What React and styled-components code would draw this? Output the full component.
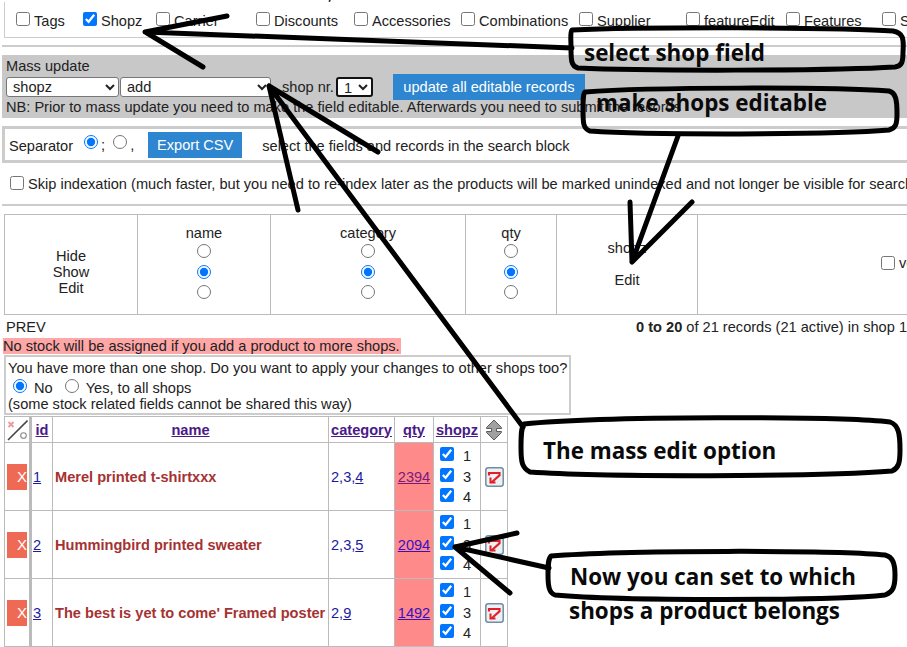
import React from "react";
import styled, { createGlobalStyle } from "styled-components";

const Global = createGlobalStyle`
  html, body { margin: 0; padding: 0; background: #fff; overflow: hidden; }
  body { font-family: "Liberation Sans", Arial, sans-serif; font-size: 14.6px; color: #222; }
  input { margin: 0; width: 14px; height: 14px; flex: none; }
`;
const Page = styled.div`
  position: relative; width: 907px; height: 647px; overflow: hidden;
`;
const Inner = styled.div`width: 1100px;`;
const ClipRow = styled.div`
  height: 2px; overflow: hidden; display: flex; align-items: flex-end; line-height: 12px;
`;
const ClipGlyph = styled.span`flex: none; margin-left: ${p => p.$l}px;`;
const FieldBox = styled.div`
  height: 35px; margin-left: 4px; display: flex; align-items: center; padding-left: 11px;
  border-left: 1px solid #ccc; border-bottom: 1px solid #ccc;
`;
const FieldItem = styled.label`
  flex: none; width: ${p => p.$w}px; display: flex; align-items: center; gap: 4px; line-height: 16px;
  white-space: nowrap; position: relative; top: 1px;
  input { position: relative; top: -2px; }
`;
const Rule = styled.div`
  height: 2px; background: #ccc; margin: ${p => p.$m};
`;
const MassBox = styled.div`
  margin: 8px 0 0 2px; height: 63px; background: #c8c8c8; padding: 3px 0 0 4px; box-sizing: border-box;
  line-height: 17px; white-space: nowrap;
`;
const MassRow = styled.div`display: flex; align-items: center; height: 24px; margin-top: 0;`;
const Sel = styled.select`
  width: ${p => p.$w}px; height: 20px; font: 14.6px "Liberation Sans", Arial, sans-serif; background: #fff; color: #222;
  border: 1px solid #777; border-radius: 3px; padding: 0 0 0 2px; margin-right: 1px; flex: none;
`;
const FocusSel = styled(Sel)`border: 2px solid #111; margin: 0 20px 0 2px;`;
const ShopNr = styled.span`margin-left: 10px; flex: none;`;
const Blue = styled.button`
  background: #2e86d0; color: #fff; border: 0; font: 14.6px "Liberation Sans", Arial, sans-serif;
  height: ${p => p.$h}px; width: ${p => p.$w}px; padding: 0; flex: none;
`;
const ExportBox = styled.div`
  margin: 8px 0 0 2px; height: 37px; border: 3px solid #ccc; border-right: 0; box-sizing: border-box;
  display: flex; align-items: center; padding-left: 4px; line-height: 16px;
`;
const SepLabel = styled.span`margin-right: 11px; position: relative; top: 1px;`;
const Sep = styled.label`display: inline-flex; align-items: center; gap: 3px; margin-right: ${p => p.$r}px;
  input { position: relative; top: -3px; }
`;
const ExportHint = styled.span`margin-left: 20px; position: relative; top: 1px;`;
const SkipRow = styled.div`
  height: 41px; display: flex; align-items: center; gap: 4px; padding-left: 10px; white-space: nowrap;
  input { position: relative; top: -1px; }
`;
const ConfTable = styled.table`
  margin: 8px 0 0 4px; border-collapse: collapse; table-layout: fixed; width: 1000px; height: 101px;
  td { border: 1px solid #bbb; padding: 0; text-align: center; vertical-align: middle; line-height: 16px; }
`;
const HideCell = styled.td`&& { padding-top: 14px; }`;
const RadioCell = styled.td`&& { padding-bottom: 5px; }`;
const ShopTd = styled.td`&& { padding-bottom: 2px; }`;
const RadioStack = styled.div`
  display: flex; flex-direction: column; align-items: center; gap: 6.3px; margin-top: 3px;
  input { display: block; }
`;
const ColName = styled.div`line-height: 16px;`;
const ShopCell = styled.div`line-height: 16px; display: flex; flex-direction: column; gap: 16px;`;
const VeRow = styled.div`display: flex; align-items: center; gap: 4px; padding-left: 183px; margin-top: -3px;`;
const PrevRow = styled.div`
  display: flex; justify-content: space-between; height: 23px; align-items: center; padding: 1px 0 0 6px; width: 907px;
  white-space: nowrap; box-sizing: border-box;
`;
const Warn = styled.div`
  display: table; background: #ffa6a6; line-height: 16px; margin-left: 3px; padding-right: 1px;
`;
const ShopBox = styled.div`
  margin: 1px 0 0 4px; width: 567px; height: 60px; border: 2px solid #ccc; box-sizing: border-box;
  padding: 3px 0 0 2px; line-height: 16px; white-space: nowrap;
`;
const ApplyRow = styled.div`
  display: flex; align-items: center; line-height: 16px; padding: 4px 0 0 5px; height: 16px;
  input { position: relative; top: -2px; }
`;
const ApplyText = styled.span`margin: 0 ${p => p.$r}px 0 7px;`;
const DataTable = styled.table`
  margin: 1px 0 0 4px; border-collapse: collapse; table-layout: fixed; width: 504px;
  th, td { border: 1px solid #bbb; padding: 0; }
  th { height: 25px; text-align: center; font-weight: bold; }
  td { height: 67px; }
`;
const Link = styled.a`color: ${p => p.$c || "#1c1aa0"}; text-decoration: underline;`;
const HeadLink = styled.a`color: #4a1a88; text-decoration: underline; font-weight: bold;`;
const DelCell = styled.td`
  && { border-right: 3px solid #bbb; text-align: left; padding-left: 2px; }
`;
const HeadFirst = styled.th`&& { border-right: 3px solid #bbb; }`;
const DelBtn = styled.span`
  display: flex; width: 20px; height: 26px; background: #ee6a55; color: #fff; font-size: 15px;
  align-items: center; justify-content: flex-end; box-sizing: border-box;
`;
const IdCell = styled.td`&& { padding-left: 1px; }`;
const NameCell = styled.td`&& { padding-left: 2px; color: #a53232; font-weight: bold; white-space: nowrap; }`;
const CatCell = styled.td`&& { padding-left: 2px; color: #1c1aa0; }`;
const QtyCell = styled.td`&& { background: #ff8a8a; text-align: center; }`;
const ShopsCell = styled.td`&& { padding-left: 6px; }`;
const ShopLine = styled.label`
  display: flex; align-items: center; height: 20.7px; gap: 9px; line-height: 20px;
  input { position: relative; top: -2px; }
`;
const EditCell = styled.td`&& { text-align: center; }`;
const Overlay = styled.svg`position: absolute; inset: 0; pointer-events: none;`;
const Note = styled.div`
  position: absolute; left: ${p => p.$x}px; top: ${p => p.$y}px; white-space: nowrap; pointer-events: none;
  font: bold 22.4px/32px "Open Sans", "Noto Sans", sans-serif; color: #0a0a0a;
`;
const IconSvg = styled.svg`display: block; margin: 0 auto;`;

const XoIcon = () => (
  <IconSvg width="22" height="22" viewBox="0 0 22 22">
    <path d="M2.5 3l5 5M7.5 3l-5 5" stroke="#e79a9a" strokeWidth="1.8" />
    <path d="M2 21L21.5 1.5" stroke="#444" strokeWidth="1.6" />
    <circle cx="17.5" cy="16.5" r="2.8" fill="none" stroke="#888" strokeWidth="1.1" />
  </IconSvg>
);
const SortIcon = () => (
  <IconSvg width="16" height="22" viewBox="0 0 16 22">
    <path d="M8 1L15.5 8.5V9.5H10.5V12.5H15.5V13.5L8 21L0.5 13.5V12.5H5.5V9.5H0.5V8.5Z" fill="#a0a0a0" stroke="#5a5a5a" strokeWidth="1" />
  </IconSvg>
);
const EditIcon = () => (
  <IconSvg width="19" height="20" viewBox="0 0 19 20">
    <rect x="0.8" y="0.8" width="17.4" height="18.4" rx="2.5" fill="#eef0f2" stroke="#6f8ea3" strokeWidth="1.5" />
    <path d="M4 8.5V6h10.5v2.2L6.5 15.5" fill="none" stroke="#e02028" strokeWidth="2.2" />
    <path d="M5.5 10.5V15.5H10.5" fill="none" stroke="#e02028" strokeWidth="2" />
  </IconSvg>
);

const fields = [
  ["Tags", 67], ["Shopz", 73, true], ["Carrier", 100], ["Discounts", 98], ["Accessories", 107],
  ["Combinations", 118], ["Supplier", 107], ["featureEdit", 100], ["Features", 96], ["Stock", 90],
];
const products = [
  { id: 1, name: "Merel printed t-shirtxxx", cat: ["2,3,", "4"], qty: 2394, c: "#7a1a7a" },
  { id: 2, name: "Hummingbird printed sweater", cat: ["2,3,", "5"], qty: 2094, c: "#3a10c0" },
  { id: 3, name: "The best is yet to come' Framed poster", cat: ["2,", "9"], qty: 1492, c: "#3a10c0" },
];
const Blank = () => {};
const Radios = () => (
  <RadioStack>
    <input type="radio" checked={false} onChange={Blank} />
    <input type="radio" checked onChange={Blank} />
    <input type="radio" checked={false} onChange={Blank} />
  </RadioStack>
);

export default function App() {
  return (
    <Page>
      <Global />
      <Inner>
        <ClipRow>
          <ClipGlyph $l={326}>y</ClipGlyph>
          <ClipGlyph $l={275}>_</ClipGlyph>
          <ClipGlyph $l={98}>_</ClipGlyph>
        </ClipRow>
        <FieldBox>
          {fields.map(([t, w, c]) => (
            <FieldItem key={t} $w={w}>
              <input type="checkbox" checked={!!c} onChange={Blank} />
              {t}
            </FieldItem>
          ))}
        </FieldBox>
        <Rule $m="7px 0 0 2px" />
        <MassBox>
          Mass update
          <MassRow>
            <Sel $w={113} defaultValue="shopz"><option>shopz</option></Sel>
            <Sel $w={151} defaultValue="add"><option>add</option></Sel>
            <ShopNr>shop nr.</ShopNr>
            <FocusSel $w={37} defaultValue="1"><option>1</option></FocusSel>
            <Blue $w={192} $h={26}>update all editable records</Blue>
          </MassRow>
          NB: Prior to mass update you need to make the field editable. Afterwards you need to submit the records
        </MassBox>
        <ExportBox>
          <SepLabel>Separator</SepLabel>
          <Sep $r={8}><input type="radio" checked onChange={Blank} />;</Sep>
          <Sep $r={14}><input type="radio" checked={false} onChange={Blank} />,</Sep>
          <Blue $w={94} $h={26}>Export CSV</Blue>
          <ExportHint>select the fields and records in the search block</ExportHint>
        </ExportBox>
        <SkipRow>
          <input type="checkbox" checked={false} onChange={Blank} />
          Skip indexation (much faster, but you need to re-index later as the products will be marked unindexed and not longer be visible for search
        </SkipRow>
        <Rule $m="0 0 0 2px" />
        <ConfTable>
          <colgroup>
            <col width="133" /><col width="133" /><col width="195" /><col width="91" /><col width="141" /><col />
          </colgroup>
          <tbody>
            <tr>
              <HideCell>Hide<br />Show<br />Edit</HideCell>
              <RadioCell><ColName>name</ColName><Radios /></RadioCell>
              <RadioCell><ColName>category</ColName><Radios /></RadioCell>
              <RadioCell><ColName>qty</ColName><Radios /></RadioCell>
              <ShopTd><ShopCell><span>shopz</span><span>Edit</span></ShopCell></ShopTd>
              <td><VeRow><input type="checkbox" checked={false} onChange={Blank} />ve</VeRow></td>
            </tr>
          </tbody>
        </ConfTable>
        <PrevRow>
          <span>PREV</span>
          <span><b>0 to 20</b> of 21 records (21 active) in shop 1</span>
        </PrevRow>
        <Warn>No stock will be assigned if you add a product to more shops.</Warn>
        <ShopBox>
          You have more than one shop. Do you want to apply your changes to other shops too?
          <ApplyRow>
            <input type="radio" checked onChange={Blank} /><ApplyText $r={12}>No</ApplyText>
            <input type="radio" checked={false} onChange={Blank} /><ApplyText $r={0}>Yes, to all shops</ApplyText>
          </ApplyRow>
          <div>(some stock related fields cannot be shared this way)</div>
        </ShopBox>
        <DataTable>
          <colgroup>
            <col width="26" /><col width="22" /><col width="276" /><col width="66" /><col width="39" /><col width="47" /><col width="27" />
          </colgroup>
          <thead>
            <tr>
              <HeadFirst><XoIcon /></HeadFirst>
              <th><HeadLink>id</HeadLink></th>
              <th><HeadLink>name</HeadLink></th>
              <th><HeadLink>category</HeadLink></th>
              <th><HeadLink>qty</HeadLink></th>
              <th><HeadLink>shopz</HeadLink></th>
              <th><SortIcon /></th>
            </tr>
          </thead>
          <tbody>
            {products.map(p => (
              <tr key={p.id}>
                <DelCell><DelBtn>X</DelBtn></DelCell>
                <IdCell><Link>{p.id}</Link></IdCell>
                <NameCell>{p.name}</NameCell>
                <CatCell>{p.cat[0]}<Link>{p.cat[1]}</Link></CatCell>
                <QtyCell><Link $c={p.c}>{p.qty}</Link></QtyCell>
                <ShopsCell>
                  {[1, 3, 4].map(s => (
                    <ShopLine key={s}><input type="checkbox" checked onChange={Blank} />{s}</ShopLine>
                  ))}
                </ShopsCell>
                <EditCell><EditIcon /></EditCell>
              </tr>
            ))}
          </tbody>
        </DataTable>
      </Inner>

      <Overlay width="907" height="647" viewBox="0 0 907 647">
        <g fill="none" stroke="#000" strokeWidth="5" strokeLinecap="round" strokeLinejoin="round">
          <path d="M227 16L145 32L572 48" />
          <path d="M147 33L203 67" />
          <path d="M572 30C640 27 840 27 893 31C903 33 904 38 903 52C903 62 902 66 895 67C830 71 640 71 578 68C571 66 571 60 571 48C571 38 570 32 572 30Z" />
          <path d="M585 92C650 87 830 87 889 91C896 93 897 100 897 114C897 124 896 128 889 130C830 135 650 135 590 131C583 129 583 122 583 110C583 100 583 94 585 92Z" />
          <path d="M678 136L632 262L630 202M632 262L692 202" />
          <path d="M378 152L269 86L298 210M269 86L523 427" />
          <path d="M524 424C600 416 840 416 890 422C899 425 900 435 900 450C900 462 899 468 892 471C820 477 600 477 530 472C522 468 521 462 521 448C521 436 521 428 524 424Z" />
          <path d="M517 533L455 547L549 568M455 547L510 593" />
          <path d="M551 556C620 550 840 550 885 555C893 557 895 564 895 575C895 587 893 592 885 595C830 601 620 601 555 595C549 593 548 586 548 575C548 565 548 559 551 556Z" />
        </g>
      </Overlay>
      <Note $x={584} $y={37}>select shop field</Note>
      <Note $x={596} $y={87}>make shops editable</Note>
      <Note $x={543} $y={435}>The mass edit option</Note>
      <Note $x={570} $y={561}>Now you can set to which</Note>
      <Note $x={569} $y={595}>shops a product belongs</Note>
    </Page>
  );
}
